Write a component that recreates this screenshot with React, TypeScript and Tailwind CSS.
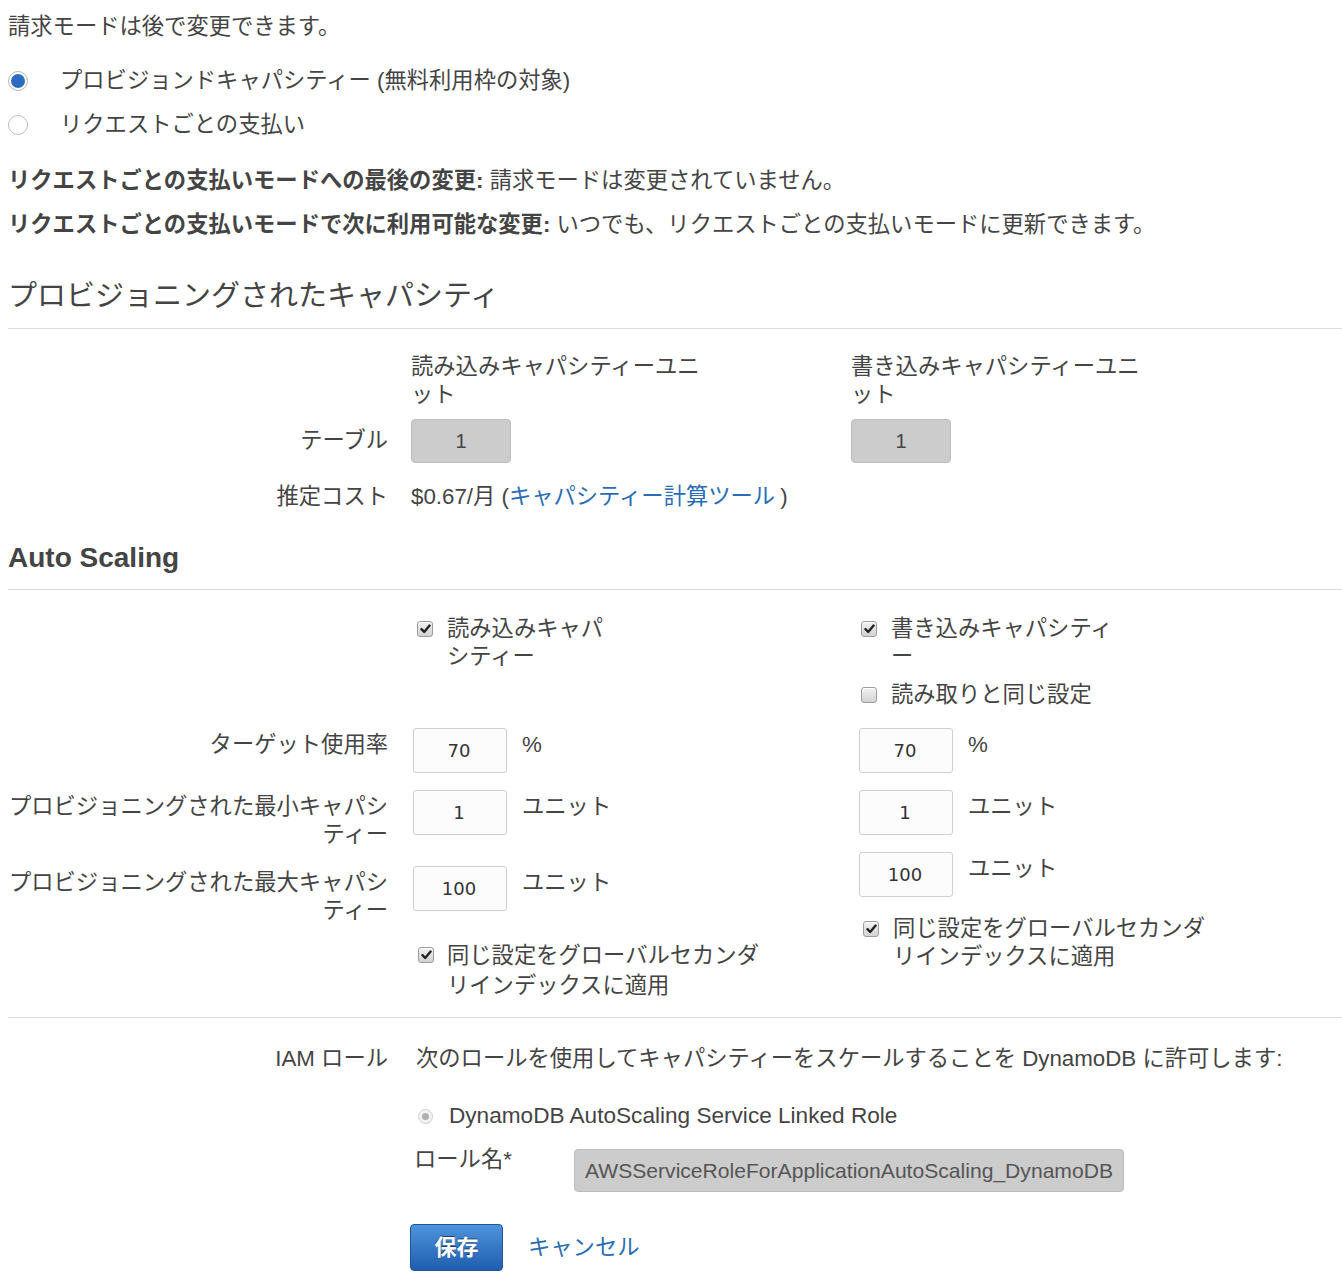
import React from "react";

function Check({ checked }: { checked: boolean }) {
  return (
    <span className="mt-[6px] flex h-[16px] w-[16px] shrink-0 items-center justify-center rounded-[3px] border border-[#9c9c9c] bg-linear-to-b from-[#f2f2f2] to-[#d2d2d2] shadow-[inset_0_1px_0_#fff]">
      {checked && (
        <svg width="11" height="10" viewBox="0 0 11 10">
          <path d="M1.5 5.2 L4.2 8 L9.6 1.6" fill="none" stroke="#222" strokeWidth="2.4" strokeLinecap="round" strokeLinejoin="round" />
        </svg>
      )}
    </span>
  );
}

function WInput({ v }: { v: string }) {
  return (
    <div className="flex h-[45px] w-[94px] shrink-0 items-center justify-center rounded-[3px] border border-[#cfcfcf] bg-[#fcfcfc] pr-[2px] font-['DejaVu_Sans',sans-serif] text-[18px] text-[#333]">
      {v}
    </div>
  );
}

function GInput({ v }: { v: string }) {
  return (
    <div className="flex h-[44px] w-[100px] items-center justify-center rounded-[4px] border border-[#bdbdbd] bg-[#cccccc] text-[20px] text-[#444]">
      {v}
    </div>
  );
}

export default function App() {
  return (
    <div className="min-h-[1276px] bg-white pl-2 font-['Liberation_Sans','Noto_Sans_CJK_JP',sans-serif] text-[22.3px] leading-[28px] text-[#444]">
      <p className="pt-[13px]">請求モードは後で変更できます。</p>

      <div className="mt-[26px] flex h-[28px] items-center">
        <span className="flex h-[20px] w-[20px] items-center justify-center rounded-full border border-[#b5b5b5] bg-white">
          <span className="h-[14px] w-[14px] rounded-full bg-[#2d6cc0]" />
        </span>
        <span className="ml-[32px]">プロビジョンドキャパシティー (無料利用枠の対象)</span>
      </div>
      <div className="mt-[16px] flex h-[28px] items-center">
        <span className="h-[20px] w-[20px] rounded-full border border-[#bdbdbd] bg-white" />
        <span className="ml-[32px]">リクエストごとの支払い</span>
      </div>

      <p className="mt-[28px]">
        <b className="font-bold">リクエストごとの支払いモードへの最後の変更:</b> 請求モードは変更されていません。
      </p>
      <p className="mt-[16px]">
        <b className="font-bold">リクエストごとの支払いモードで次に利用可能な変更:</b> いつでも、リクエストごとの支払いモードに更新できます。
      </p>

      <h2 className="mt-[39px] text-[29px] leading-[36px] font-normal">プロビジョニングされたキャパシティ</h2>
      <div className="mt-[14px] h-px bg-[#dcdcdc]" />

      <div className="mt-[24px] flex">
        <div className="w-[380px]" />
        <div className="ml-[23px] w-[440px]">
          <div className="w-[300px]">読み込みキャパシティーユニット</div>
        </div>
        <div className="w-[300px]">書き込みキャパシティーユニット</div>
      </div>
      <div className="mt-[10px] flex items-center">
        <div className="w-[380px] text-right">テーブル</div>
        <div className="ml-[23px] w-[440px]">
          <GInput v="1" />
        </div>
        <GInput v="1" />
      </div>
      <div className="mt-[20px] flex">
        <div className="w-[380px] text-right">推定コスト</div>
        <div className="ml-[23px]">
          $0.67/月 (<span className="text-[#2a6db6]">キャパシティー計算ツール</span>
          <span className="ml-[5px]">)</span>
        </div>
      </div>

      <h2 className="mt-[30px] text-[28px] leading-[34px] font-bold">Auto Scaling</h2>
      <div className="mt-[14px] h-px bg-[#dcdcdc]" />

      <div className="mt-[25px] flex">
        {/* left part */}
        <div className="w-[851px]">
          <div className="flex">
            <div className="w-[380px]" />
            <div className="ml-[29px] flex">
              <Check checked />
              <span className="ml-[14px]">
                読み込みキャパ
                <br />
                シティー
              </span>
            </div>
          </div>
          <div className="mt-[57px] flex items-start">
            <div className="w-[380px] pt-[3px] text-right">ターゲット使用率</div>
            <div className="ml-[25px]">
              <WInput v="70" />
            </div>
            <span className="ml-[15px] pt-[3px]">%</span>
          </div>
          <div className="mt-[17px] flex items-start">
            <div className="w-[380px] pt-[3px] text-right">プロビジョニングされた最小キャパシティー</div>
            <div className="ml-[25px]">
              <WInput v="1" />
            </div>
            <span className="ml-[15px] pt-[3px]">ユニット</span>
          </div>
          <div className="mt-[17px] flex items-start">
            <div className="w-[380px] pt-[3px] text-right">プロビジョニングされた最大キャパシティー</div>
            <div className="ml-[25px]">
              <WInput v="100" />
            </div>
            <span className="ml-[15px] pt-[3px]">ユニット</span>
          </div>
          <div className="mt-[16px] flex">
            <div className="w-[380px]" />
            <div className="ml-[30px] flex">
              <Check checked />
              <span className="ml-[13px] leading-[30px]">
                同じ設定をグローバルセカンダ
                <br />
                リインデックスに適用
              </span>
            </div>
          </div>
        </div>

        {/* right part */}
        <div>
          <div className="ml-[2px] flex">
            <Check checked />
            <span className="ml-[14px]">
              書き込みキャパシティ
              <br />ー
            </span>
          </div>
          <div className="ml-[2px] mt-[10px] flex">
            <Check checked={false} />
            <span className="ml-[14px]">読み取りと同じ設定</span>
          </div>
          <div className="mt-[19px] flex items-start">
            <WInput v="70" />
            <span className="ml-[15px] pt-[3px]">%</span>
          </div>
          <div className="mt-[17px] flex items-start">
            <WInput v="1" />
            <span className="ml-[15px] pt-[3px]">ユニット</span>
          </div>
          <div className="mt-[17px] flex items-start">
            <WInput v="100" />
            <span className="ml-[15px] pt-[3px]">ユニット</span>
          </div>
          <div className="ml-[4px] mt-[18px] flex">
            <Check checked />
            <span className="ml-[14px]">
              同じ設定をグローバルセカンダ
              <br />
              リインデックスに適用
            </span>
          </div>
        </div>
      </div>

      <div className="mt-[16px] h-px bg-[#dcdcdc]" />

      <div className="mt-[27px] flex">
        <div className="w-[380px] text-right">IAM ロール</div>
        <div className="ml-[28px]">次のロールを使用してキャパシティーをスケールすることを DynamoDB に許可します:</div>
      </div>
      <div className="mt-[29px] flex items-center">
        <div className="w-[380px]" />
        <div className="ml-[30px] flex items-center">
          <span className="flex h-[15px] w-[15px] items-center justify-center rounded-full border border-[#d0d0d0] bg-[#f3f3f3]">
            <span className="h-[7px] w-[7px] rounded-full bg-[#b0b0b0]" />
          </span>
          <span className="ml-[16px] text-[22.6px]">DynamoDB AutoScaling Service Linked Role</span>
        </div>
      </div>
      <div className="mt-[19px] flex items-start">
        <div className="w-[380px]" />
        <div className="ml-[26px] mt-[-3px] w-[160px]">ロール名*</div>
        <div className="flex h-[43px] w-[550px] items-center rounded-[4px] border border-[#bdbdbd] bg-[#cccccc] pl-[10px] text-[21.1px] text-[#555]">
          AWSServiceRoleForApplicationAutoScaling_DynamoDB
        </div>
      </div>
      <div className="mt-[32px] flex items-center">
        <div className="w-[380px]" />
        <button className="ml-[22px] flex h-[47px] w-[93px] items-center justify-center rounded-[4px] border border-[#1d5597] bg-linear-to-b from-[#4f93dc] to-[#1f5eae] text-[22px] font-bold text-white [text-shadow:0_-1px_0_rgba(0,0,0,0.5)]">
          保存
        </button>
        <span className="ml-[25px] text-[#2a6db6]">キャンセル</span>
      </div>
    </div>
  );
}
